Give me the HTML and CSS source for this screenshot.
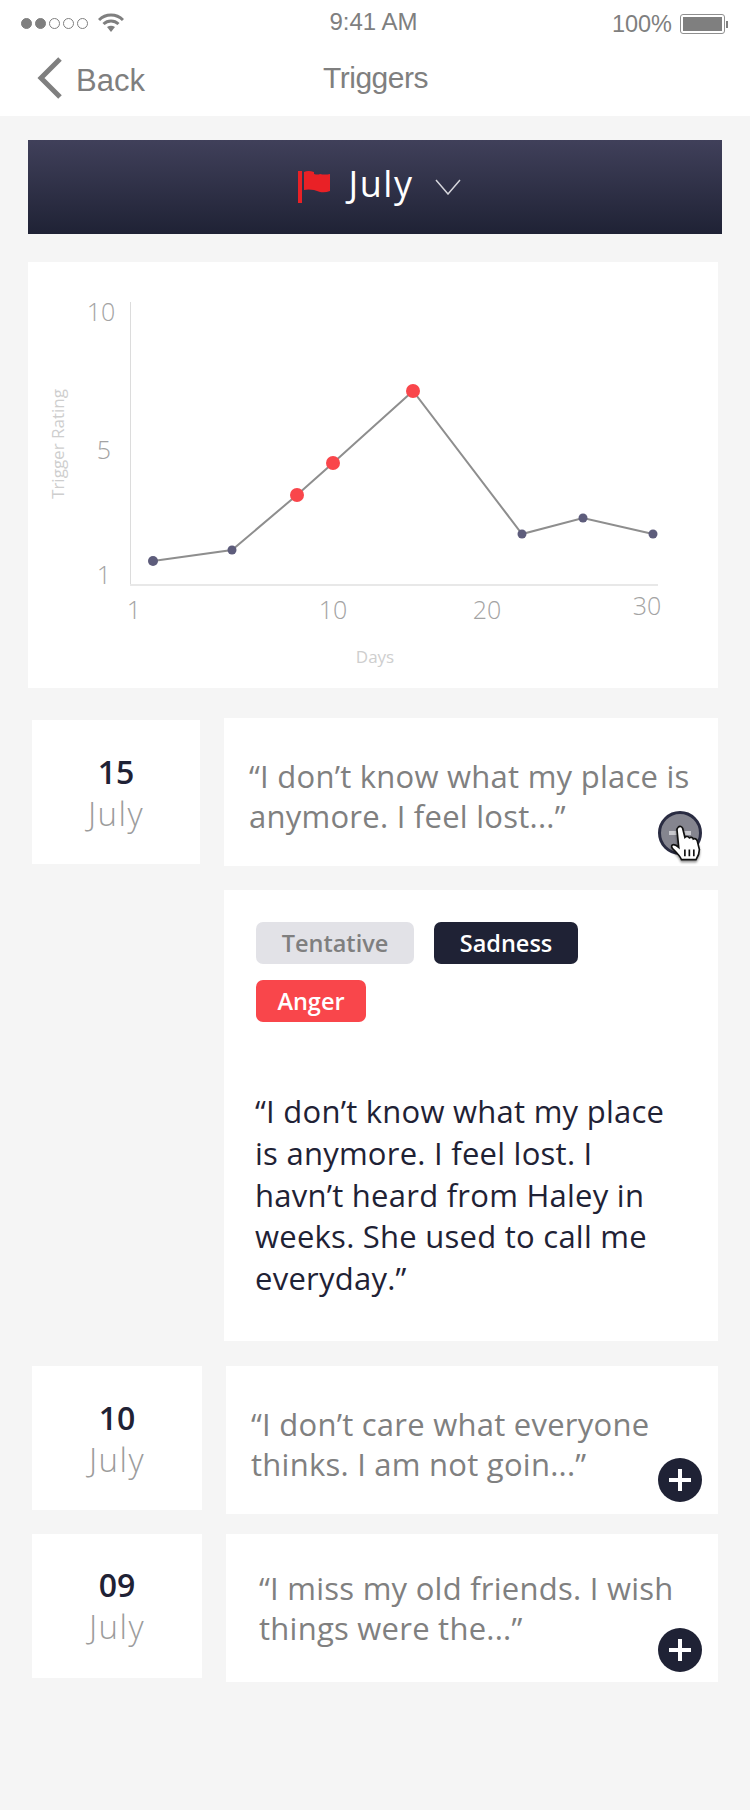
FILE: index.html
```html
<!DOCTYPE html>
<html lang="en">
<head>
  <meta charset="UTF-8">
  <meta name="viewport" content="width=device-width, initial-scale=1.0">
  <title>Triggers</title>
  <link rel="stylesheet" href="styles.css">
</head>
<body>
  <header class="top">
    <div class="status-bar">
      <div class="signal">
        <span class="dot full"></span><span class="dot full"></span><span class="dot"></span><span class="dot"></span><span class="dot"></span>
        <svg class="wifi" width="26" height="20" viewBox="0 0 26 20">
          <path d="M1 7 A17 17 0 0 1 25 7" fill="none" stroke="#7f7f7f" stroke-width="3"/>
          <path d="M5.500 11 A11 11 0 0 1 20.500 11" fill="none" stroke="#7f7f7f" stroke-width="3"/>
          <path d="M9 14 Q13 11.500 17 14 L13 19 Z" fill="#7f7f7f"/>
        </svg>
      </div>
      <div class="clock">9:41 AM</div>
      <div class="power">
        <span>100%</span>
        <div class="battery"><div class="battery-fill"></div></div>
        <div class="battery-tip"></div>
      </div>
    </div>
    <nav class="nav-bar">
      <a class="back">
        <svg width="26" height="42" viewBox="0 0 26 42">
          <path d="M23 2 L4 21 L23 40" fill="none" stroke="#7f7f7f" stroke-width="5"/>
        </svg>
        <span>Back</span>
      </a>
      <h1>Triggers</h1>
    </nav>
  </header>

  <main class="content">
    <div class="month-bar">
      <svg width="33" height="32" viewBox="0 0 33 32">
        <rect x="0" y="0" width="4" height="32" fill="#e92126"/>
        <path d="M6 1 Q10 -1 16 1 L16 3 Q20 4 22 3 Q27 4 32 3 V20 Q27 22 22 21 L16 19 Q10 18 6 19 Z" fill="#e92126"/>
      </svg>
      <span class="month-name">July</span>
      <svg width="26" height="16" viewBox="0 0 26 16">
        <path d="M1 1 L13 15 L25 1" fill="none" stroke="#d6d6dc" stroke-width="1.500"/>
      </svg>
    </div>

    <section class="chart-card">
      <svg class="chart" width="690" height="426" viewBox="0 0 690 426">
        <line x1="102.500" y1="40" x2="102.500" y2="323" stroke="#dcdcdc" stroke-width="1"/>
        <line x1="102" y1="323" x2="630" y2="323" stroke="#e8e8e8" stroke-width="2"/>
        <polyline points="125,299 204,288 269,233 305,201 385,129 494,272 555,256 625,272" fill="none" stroke="#8e8e8e" stroke-width="2"/>
        <circle class="pt" cx="125" cy="299" r="5"/>
        <circle class="pt" cx="204" cy="288" r="4.500"/>
        <circle class="pt" cx="494" cy="272" r="4.500"/>
        <circle class="pt" cx="555" cy="256" r="4.500"/>
        <circle class="pt" cx="625" cy="272" r="4.500"/>
        <circle class="pt-hot" cx="269" cy="233" r="7"/>
        <circle class="pt-hot" cx="305" cy="201" r="7"/>
        <circle class="pt-hot" cx="385" cy="129" r="7"/>
        <text class="tick" x="73" y="59" text-anchor="middle">10</text>
        <text class="tick" x="76" y="197" text-anchor="middle">5</text>
        <text class="tick" x="76" y="322" text-anchor="middle">1</text>
        <text class="tick" x="106" y="357" text-anchor="middle">1</text>
        <text class="tick" x="305" y="357" text-anchor="middle">10</text>
        <text class="tick" x="459" y="357" text-anchor="middle">20</text>
        <text class="tick" x="619" y="353" text-anchor="middle">30</text>
        <text class="axis-name" x="347" y="401" text-anchor="middle">Days</text>
        <text class="axis-name" transform="translate(36 182) rotate(-90)" text-anchor="middle">Trigger Rating</text>
      </svg>
    </section>

    <div class="entry entry-open">
      <div class="date-card">
        <div class="day">15</div>
        <div class="month">July</div>
      </div>
      <div class="quote-card">
        <p>“I don’t know what my place is anymore. I feel lost...”</p>
        <div class="toggle toggle-active">
          <span class="toggle-bar"></span>
          <svg class="hand" width="36" height="38" viewBox="0 0 32 34">
            <path d="M9 2 C10.500 .5 12.500 1.500 13 3 L15 11 C16 10 18 10 19 11.500 C20 10.700 22 10.900 22.500 12.500 C23.700 11.900 25.500 12.300 26 14 L28 22 C28 26 27 28 25 31 H12 C11 28 8 25 4 21 C2.500 19 3 17.500 5 17.500 C6.500 17.500 8 18.500 9.500 20 L8 5 C7.700 4 8 3 9 2 Z" fill="#fff" stroke="#111" stroke-width="1.500"/>
            <path d="M15 22 V28 M19 22 V28 M23 22 V28" stroke="#111" stroke-width="1.500"/>
          </svg>
        </div>
      </div>
    </div>

    <article class="detail-card">
      <div class="chips">
        <span class="chip chip-tentative">Tentative</span>
        <span class="chip chip-sadness">Sadness</span>
        <span class="chip chip-anger">Anger</span>
      </div>
      <p>“I don’t know what my place is anymore. I feel lost. I havn’t heard from Haley in weeks. She used to call me everyday.”</p>
    </article>

    <div class="entry entry-second">
      <div class="date-card">
        <div class="day">10</div>
        <div class="month">July</div>
      </div>
      <div class="quote-card">
        <p>“I don’t care what everyone thinks. I am not goin...”</p>
        <div class="toggle"><span class="toggle-bar"></span><span class="toggle-stem"></span></div>
      </div>
    </div>

    <div class="entry entry-third">
      <div class="date-card">
        <div class="day">09</div>
        <div class="month">July</div>
      </div>
      <div class="quote-card">
        <p>“I miss my old friends. I wish things were the...”</p>
        <div class="toggle"><span class="toggle-bar"></span><span class="toggle-stem"></span></div>
      </div>
    </div>
  </main>
</body>
</html>
```

FILE: styles.css
```css
* {
  box-sizing: border-box;
}

body {
  margin: 0;
  min-height: 1810px;
  background: #f5f5f5;
  font-family: "Open Sans", "Liberation Sans", sans-serif;
}

p, h1 {
  margin: 0;
}

.top {
  height: 116px;
  background: #fff;
  color: #7f7f7f;
  font-family: "Liberation Sans", sans-serif;
}

.status-bar {
  height: 46px;
  display: grid;
  grid-template-columns: 1fr auto 1fr;
  align-items: center;
  padding: 0 22px 0 21px;
}

.signal {
  display: flex;
  align-items: center;
  gap: 3px;
}

.dot {
  width: 11px;
  height: 11px;
  border: 1px solid #7f7f7f;
  border-radius: 50%;
}

.dot.full {
  background: #7f7f7f;
}

.wifi {
  margin-left: 7px;
}

.clock {
  font-size: 24px;
  margin-top: -2px;
  margin-left: -2px;
}

.power {
  display: flex;
  align-items: center;
  justify-content: flex-end;
  font-size: 23.500px;
}

.power span {
  margin-right: 8px;
  margin-top: 2px;
}

.battery {
  width: 45px;
  height: 20px;
  border: 1px solid #8f8f8f;
  border-radius: 3px;
  padding: 2px;
  margin-top: 2px;
}

.battery-fill {
  height: 100%;
  background: #7f7f7f;
}

.battery-tip {
  width: 2px;
  height: 7px;
  background: #7f7f7f;
  margin-top: 2px;
  margin-left: 1px;
}

.nav-bar {
  display: grid;
  grid-template-columns: 1fr auto 1fr;
  align-items: center;
  height: 46px;
  padding: 0 37px;
  margin-top: 9px;
}

.back {
  display: flex;
  align-items: center;
  gap: 13px;
  font-size: 31px;
}

.back span {
  margin-top: 5px;
}

.nav-bar h1 {
  font-size: 30px;
  font-weight: normal;
  letter-spacing: -0.5px;
  margin-left: 1px;
}

.content {
  padding: 24px 32px 0 32px;
}

.month-bar {
  height: 94px;
  margin: 0 -4px 0 -4px;
  display: flex;
  align-items: center;
  justify-content: center;
  background: linear-gradient(#40405a, #1f2235);
  padding-left: 9px;
}

.month-name {
  color: #fff;
  font-size: 36px;
  letter-spacing: 1.500px;
  line-height: 40px;
  margin: -6px 22px 0 18px;
}

.chart-card {
  margin: 28px 0 0 -4px;
  height: 426px;
  background: #fff;
}

.chart {
  display: block;
}

.tick {
  font-family: "Open Sans", sans-serif;
  font-weight: 300;
  font-size: 25px;
  fill: #a3a3a3;
}

.axis-name {
  font-family: "Open Sans", sans-serif;
  font-size: 17px;
  fill: #cecece;
}

.pt {
  fill: #5d5c7b;
}

.pt-hot {
  fill: #f9464b;
}

.entry {
  display: flex;
  align-items: flex-start;
  gap: 24px;
}

.entry-open {
  margin-top: 30px;
}

.entry-second {
  margin-top: 25px;
}

.entry-third {
  margin-top: 20px;
}

.date-card {
  width: 170px;
  height: 144px;
  flex: none;
  background: #fff;
  text-align: center;
  padding-top: 31px;
}

.entry-open .date-card {
  width: 168px;
  margin-top: 2px;
}

.entry-third .date-card {
  padding-top: 30px;
}

.day {
  color: #1f2235;
  font-size: 32px;
  font-weight: 600;
  line-height: 42px;
}

.month {
  color: #9c9c9c;
  font-size: 33px;
  font-weight: 300;
  letter-spacing: 1.500px;
  line-height: 42px;
}

.quote-card {
  position: relative;
  flex: 1;
  height: 148px;
  background: #fff;
  padding: 38px 14px 0 25px;
  color: #808080;
  font-size: 31px;
  letter-spacing: 0.250px;
  line-height: 40px;
}

.entry-third .quote-card {
  padding: 34px 30px 0 33px;
}

.toggle {
  position: absolute;
  right: 16px;
  bottom: 12px;
  width: 44px;
  height: 44px;
  border-radius: 50%;
  background: #1f2235;
}

.entry-open .toggle {
  bottom: 11px;
}

.entry-third .toggle {
  bottom: 10px;
}

.toggle-bar {
  position: absolute;
  left: 11px;
  top: 20px;
  width: 22px;
  height: 4px;
  background: #fff;
}

.toggle-stem {
  position: absolute;
  left: 20px;
  top: 11px;
  width: 4px;
  height: 22px;
  background: #fff;
}

.toggle-active {
  background: #85858f;
  border: 3px solid #2a2c42;
}

.toggle-active .toggle-bar {
  left: 8px;
  top: 17px;
  background: #c9c9ce;
}

.hand {
  position: absolute;
  left: 7px;
  top: 11px;
  filter: drop-shadow(0 2px 1px rgba(0, 0, 0, 0.4));
}

.detail-card {
  margin: 24px 0 0 192px;
  height: 451px;
  background: #fff;
  padding: 32px 32px 0 31px;
  color: #1f2235;
  font-size: 31px;
  letter-spacing: 0.250px;
  line-height: 41.750px;
}

.chips {
  display: flex;
  flex-wrap: wrap;
  gap: 16px 20px;
  margin: 0 0 69px 1px;
  letter-spacing: 0;
}

.chip {
  height: 42px;
  border-radius: 7px;
  font-size: 23.500px;
  font-weight: 600;
  line-height: 42px;
  text-align: center;
}

.chip-tentative {
  width: 158px;
  background: #e2e2e7;
  color: #7f7f7f;
}

.chip-sadness {
  width: 144px;
  background: #1f2235;
  color: #fff;
}

.chip-anger {
  width: 110px;
  background: #f9464b;
  color: #fff;
}
```
